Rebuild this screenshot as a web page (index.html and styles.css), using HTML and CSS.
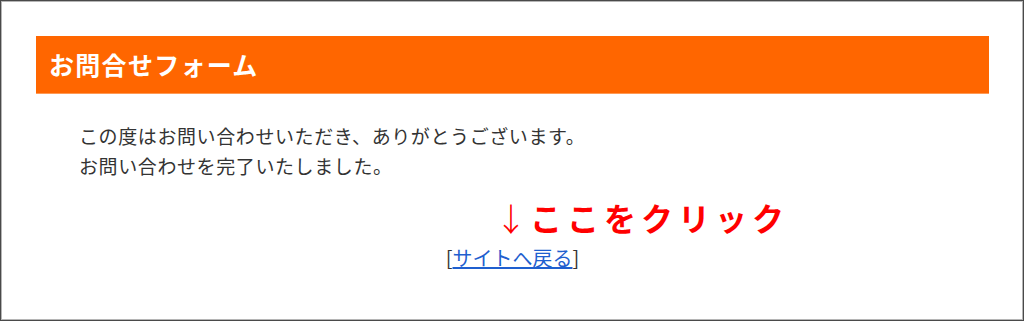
FILE: index.html
```
<!DOCTYPE html>
<html lang="ja">
<head>
<meta charset="utf-8">
<title>お問合せフォーム</title>
<link rel="stylesheet" href="styles.css">
</head>
<body>
<div class="frame">
  <h1 class="title">お問合せフォーム</h1>
  <div class="message">
    <p>この度はお問い合わせいただき、ありがとうございます。</p>
    <p>お問い合わせを完了いたしました。</p>
  </div>
  <p class="hint"><span class="arrow">↓</span>ここをクリック</p>
  <p class="back">[<a href="#">サイトへ戻る</a>]</p>
</div>
</body>
</html>
```
FILE: styles.css
```
html, body {
  margin: 0;
  padding: 0;
  background: #fff;
}
.frame {
  box-sizing: border-box;
  width: 1024px;
  height: 321px;
  border: 1px solid #4a4a4a;
  box-shadow: inset 0 0 0 1px #b5b5b5;
  padding: 35px 34px 0 35px;
  font-family: "Noto Sans CJK JP", "Noto Sans", sans-serif;
  color: #333;
}
.title {
  margin: 0;
  height: 57px;
  line-height: 57px;
  background: #ff6600;
  border-bottom: 1px solid #ff9a55;
  color: #fff;
  font-size: 25px;
  letter-spacing: 1.3px;
  font-weight: bold;
  padding-left: 13px;
}
.message {
  margin: 27px 0 0 43px;
  font-size: 19px;
  letter-spacing: 0.6px;
  line-height: 30px;
}
.message p {
  margin: 0;
}
.hint {
  margin: 14px 0 0 459px;
  font-size: 32px;
  line-height: 44px;
  font-weight: bold;
  color: #ff0000;
  letter-spacing: 5px;
}
.arrow {
  font-weight: 300;
  letter-spacing: 3px;
}
.back {
  margin: 4px 0 0;
  text-align: center;
  font-size: 20px;
  line-height: 30px;
  color: #333;
}
.back a {
  color: #1f5fcf;
  text-decoration: underline;
}
```
